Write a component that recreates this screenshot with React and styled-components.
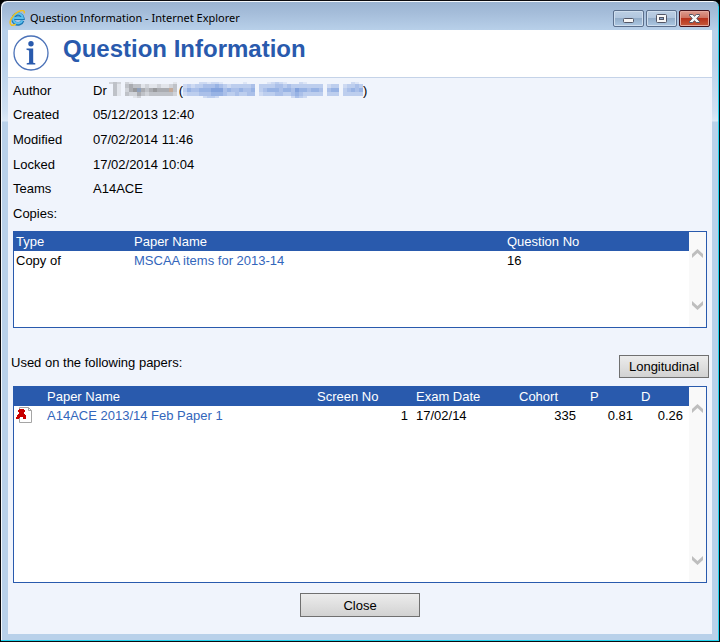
import React from "react";
import styled, { createGlobalStyle } from "styled-components";

const Global = createGlobalStyle`
  *, *::before, *::after { box-sizing: border-box; }
  html, body, #root { height: 100%; }
  body { margin: 0; background: #000; font-family: "Liberation Sans", Arial, sans-serif; font-size: 13px; line-height: 19px; color: #000; }
  button { font: inherit; color: inherit; }
  svg { display: block; }
`;

const Window = styled.div`
  min-height: 100%;
  display: flex;
  flex-direction: column;
  padding: 0 7px 7px;
  background: linear-gradient(#9ab3d1 0, #a5bdda 12px, #b9d1ea 30px, #b9d1ea 60px, #cfe0f2 110px, #dce9f7 120px, #b9d1ea 121px);
  border: 1px solid #0b0b0f;
  border-radius: 7px 7px 0 0;
  box-shadow: inset -1px -1px 0 #22d3ee, inset 1px 1px 0 #f4f8fc;
`;

const TitleBar = styled.header`
  display: flex;
  align-items: center;
  height: 29px;
  padding: 5px 2px 0 1px;
  gap: 4px;
`;

const WindowTitle = styled.span`
  flex: 1;
  font: 11px/18px "Noto Sans", "Segoe UI", sans-serif;
`;

const WindowButtons = styled.div`
  display: flex;
  gap: 2px;
`;

const WindowButton = styled.button`
  display: grid;
  place-items: center;
  width: 31px;
  height: 17px;
  padding: 0;
  border: 1px solid ${(p) => (p.$danger ? "#43121c" : "#5b6f8c")};
  border-radius: 2px;
  background: ${(p) => p.$danger
    ? "linear-gradient(#dd9c90 0, #cf7362 45%, #b8321c 50%, #c65a3c 100%)"
    : "linear-gradient(#bccfe4 0, #b1c6de 45%, #93adc9 50%, #adc8e3 100%)"};
  box-shadow: inset 0 0 0 1px ${(p) => (p.$danger ? "#e5a79c" : "#cfdeee")};
`;

const Page = styled.main`
  flex: 1;
  display: flex;
  flex-direction: column;
  background: #f0f4fc;
`;

const Banner = styled.div`
  display: flex;
  gap: 14px;
  height: 48px;
  padding: 5px;
  background: #fff;
  border-bottom: 1px solid #c5d3e8;
`;

const Heading = styled.h1`
  margin: 0;
  font-size: 24px;
  line-height: 28px;
  color: #295aad;
`;

const Content = styled.div`
  flex: 1;
  display: flex;
  flex-direction: column;
  padding: 0 5px 17px;
`;

const Details = styled.dl`
  display: grid;
  grid-template-columns: 80px 1fr;
  grid-auto-rows: 24px 25px 25px;
  align-items: center;
  margin: 0 0 5px;
`;

const Term = styled.dt``;

const Detail = styled.dd`
  display: flex;
  align-items: center;
  margin: 0;
`;

const Redacted = styled.span`
  margin: 0 ${(p) => (p.$link ? 0 : 2)}px;
`;

const Panel = styled.section`
  display: flex;
  min-height: 97px;
  flex: ${(p) => (p.$grow ? 1 : "none")};
  background: #fff;
  border: 1px solid #295aad;
`;

const PanelBody = styled.div`
  flex: 1;
`;

const Table = styled.table`
  width: 100%;
  table-layout: fixed;
  border-collapse: collapse;
`;

const HeadCell = styled.th`
  width: ${(p) => (p.$width ? `${p.$width}px` : "auto")};
  padding: 0 2px;
  font-weight: 400;
  text-align: left;
  white-space: nowrap;
  color: #fff;
  background: #295aad;
`;

const Cell = styled.td`
  height: 19px;
  padding: 0 ${(p) => p.$end || 2}px 0 2px;
  text-align: ${(p) => (p.$end ? "right" : "left")};
`;

const Link = styled.a`
  color: #3366bb;
  text-decoration: none;
`;

const ScrollBar = styled.div`
  display: flex;
  flex-direction: column;
  justify-content: space-between;
  width: 17px;
  padding: 17px 0;
  background: #f9f9f9;
`;

const ScrollButton = styled.button`
  display: block;
  padding: 0;
  border: 0;
  background: none;
`;

const UsageBar = styled.div`
  display: flex;
  justify-content: space-between;
  align-items: flex-start;
  margin: 25px -2px 8px;
`;

const Button = styled.button`
  width: 90px;
  height: 23px;
  margin-top: 2px;
  padding: 0;
  border: 1px solid #707070;
  background: linear-gradient(#ececec, #d2d2d2);
`;

const CloseButton = styled(Button)`
  align-self: center;
  width: 120px;
  height: 24px;
  margin-top: 10px;
`;

const Svg = (props) => <svg aria-hidden="true" focusable="false" fill="none" {...props} />;

const ExplorerIcon = () => (
  <Svg width="17" height="17" viewBox="0 0 17 17">
    <path d="M13.7 10.6A5 5 0 1 1 13.9 8.2H5.2" stroke="#1b78b4" strokeWidth="3.4" />
    <path d="M13.4 10.4A4.9 4.9 0 1 1 13.8 8.1H5.2" stroke="#5cc0ee" strokeWidth="2" />
    <path d="M2.2 15C-.8 12.4 3.2 4.8 9 1.8c4-2 6.9-1.8 6.2 1.5M2.2 15c1.3.7 3 .1 4.6-.9" stroke="#f0bf24" strokeWidth="1.5" />
  </Svg>
);

const InfoIcon = () => (
  <Svg width="36" height="36" viewBox="0 0 36 36">
    <circle cx="18" cy="18" r="17" fill="#fff" stroke="#4b72b8" strokeWidth="1.3" />
    <circle cx="18" cy="8.7" r="2.7" fill="#295aad" />
    <path d="M13.5 13.4h6.7v14.4l2.1.5v1.3h-8.6v-1.3l2.4-.5V15.4l-2.6-.7z" fill="#295aad" />
  </Svg>
);

const PinIcon = () => (
  <Svg width="17" height="17" viewBox="0 0 17 17">
    <path d="M3.5.5h9l3 3v12h-12z" fill="#fff" stroke="#a5a5a5" />
    <path d="M12.5.5v3h3" stroke="#a5a5a5" />
    <path d="M3 2h5v1h1v2H8v2h1v1h1v2h-1v1H7v-1H4v1H2v-1H1V8h1V7h1V5H2V3h1z" fill="#c80000" />
    <path d="M0 10h3v2H0zM7 10h3v2H7z" fill="#c80000" />
  </Svg>
);

const MinimizeIcon = () => (
  <Svg width="11" height="9" viewBox="0 0 11 9">
    <rect x=".5" y="4.5" width="10" height="4" rx="1" fill="#f7f7f7" stroke="#535666" />
  </Svg>
);

const MaximizeIcon = () => (
  <Svg width="11" height="9" viewBox="0 0 11 9">
    <rect x=".5" y=".5" width="10" height="8" rx="1" fill="#f7f7f7" stroke="#535666" />
    <rect x="3.5" y="3.5" width="4" height="2" fill="#8ba8cb" stroke="#535666" />
  </Svg>
);

const CloseIcon = () => (
  <Svg width="11" height="9" viewBox="0 0 11 9">
    <path d="M.5.5h3.2l1.8 1.7L7.3.5h3.2v1L7.8 4.5l2.7 3v1H7.3L5.5 6.8 3.7 8.5H.5v-1l2.7-3-2.7-3z" fill="#f7f7f7" stroke="#535666" />
  </Svg>
);

const Chevron = ({ down }) => (
  <Svg width="17" height="9" viewBox="0 0 17 9">
    <path d={down ? "M3 0 8.5 5 14 0V4L8.5 9 3 4z" : "M3 9 8.5 4 14 9V5L8.5 0 3 5z"} fill="#bebebe" />
  </Svg>
);

const GREYS = { a: "#e2e5eb", b: "#d0d3d9", c: "#bfc2c8", d: "#aaacb1", e: "#98999c", f: "#c3aa9a", g: "#8fa0bb" };
const BLUES = { a: "#dee6f6", b: "#cedaf2", c: "#bdceee", d: "#abc0e9", e: "#98b3e4", f: "#84a3dd" };

const NAME_ROWS = [
  "bcb ba          ac",
  " ca cdccabaabaabc",
  " ca bdegdcdedddfc",
  " ca cbbdcbccccccb",
  "      ab         ",
];
const MAIL_ROWS = [
  "    bbabba     a     abcba   ba           ba ",
  "bcbccdddedcbcccccd ccccddcdcccccccc bcc bccdc",
  "ceddeeefffdeddedde cdeeedeedfeedeed dee cdede",
  "bcccdddeeedccdccdd bcccddccdedccccc ccc ccccc",
  "     bccb                  bdcb              ",
];

const Mosaic = ({ rows, colors }) => (
  <Svg width={rows[1].length * 4} height="16" viewBox={`0 0 ${rows[1].length * 4} 16`} shapeRendering="crispEdges">
    {rows.flatMap((row, y) =>
      [...row].map((c, x) =>
        colors[c] ? <rect key={`${x}-${y}`} x={x * 4} y={y * 4 - 2} width="4" height="4" fill={colors[c]} /> : null
      )
    )}
  </Svg>
);

const DETAILS = [
  ["Created", "05/12/2013 12:40"],
  ["Modified", "07/02/2014 11:46"],
  ["Locked", "17/02/2014 10:04"],
  ["Teams", "A14ACE"],
  ["Copies:", ""],
];

const Scroller = () => (
  <ScrollBar>
    <ScrollButton type="button" aria-label="Scroll up"><Chevron /></ScrollButton>
    <ScrollButton type="button" aria-label="Scroll down"><Chevron down /></ScrollButton>
  </ScrollBar>
);

export default function App() {
  return (
    <>
      <Global />
      <Window>
        <TitleBar>
          <ExplorerIcon />
          <WindowTitle>Question Information - Internet Explorer</WindowTitle>
          <WindowButtons>
            <WindowButton type="button" aria-label="Minimize"><MinimizeIcon /></WindowButton>
            <WindowButton type="button" aria-label="Maximize"><MaximizeIcon /></WindowButton>
            <WindowButton type="button" aria-label="Close window" $danger><CloseIcon /></WindowButton>
          </WindowButtons>
        </TitleBar>
        <Page>
          <Banner>
            <InfoIcon />
            <Heading>Question Information</Heading>
          </Banner>
          <Content>
            <Details>
              <Term>Author</Term>
              <Detail>
                Dr
                <Redacted><Mosaic rows={NAME_ROWS} colors={GREYS} /></Redacted>
                (
                <Link href="#author" aria-label="Email the author">
                  <Redacted $link><Mosaic rows={MAIL_ROWS} colors={BLUES} /></Redacted>
                </Link>
                )
              </Detail>
              {DETAILS.map(([label, value]) => (
                <React.Fragment key={label}>
                  <Term>{label}</Term>
                  <Detail>{value}</Detail>
                </React.Fragment>
              ))}
            </Details>
            <Panel>
              <PanelBody>
                <Table>
                  <thead>
                    <tr>
                      <HeadCell $width={118}>Type</HeadCell>
                      <HeadCell>Paper Name</HeadCell>
                      <HeadCell $width={184}>Question No</HeadCell>
                    </tr>
                  </thead>
                  <tbody>
                    <tr>
                      <Cell>Copy of</Cell>
                      <Cell><Link href="#copy">MSCAA items for 2013-14</Link></Cell>
                      <Cell>16</Cell>
                    </tr>
                  </tbody>
                </Table>
              </PanelBody>
              <Scroller />
            </Panel>
            <UsageBar>
              <span>Used on the following papers:</span>
              <Button type="button">Longitudinal</Button>
            </UsageBar>
            <Panel $grow>
              <PanelBody>
                <Table>
                  <thead>
                    <tr>
                      <HeadCell $width={31} aria-label="Status" />
                      <HeadCell>Paper Name</HeadCell>
                      <HeadCell $width={99}>Screen No</HeadCell>
                      <HeadCell $width={103}>Exam Date</HeadCell>
                      <HeadCell $width={71}>Cohort</HeadCell>
                      <HeadCell $width={51}>P</HeadCell>
                      <HeadCell $width={50}>D</HeadCell>
                    </tr>
                  </thead>
                  <tbody>
                    <tr>
                      <Cell><PinIcon /></Cell>
                      <Cell><Link href="#paper">A14ACE 2013/14 Feb Paper 1</Link></Cell>
                      <Cell $end={6}>1</Cell>
                      <Cell>17/02/14</Cell>
                      <Cell $end={12}>335</Cell>
                      <Cell $end={6}>0.81</Cell>
                      <Cell $end={6}>0.26</Cell>
                    </tr>
                  </tbody>
                </Table>
              </PanelBody>
              <Scroller />
            </Panel>
            <CloseButton type="button">Close</CloseButton>
          </Content>
        </Page>
      </Window>
    </>
  );
}
